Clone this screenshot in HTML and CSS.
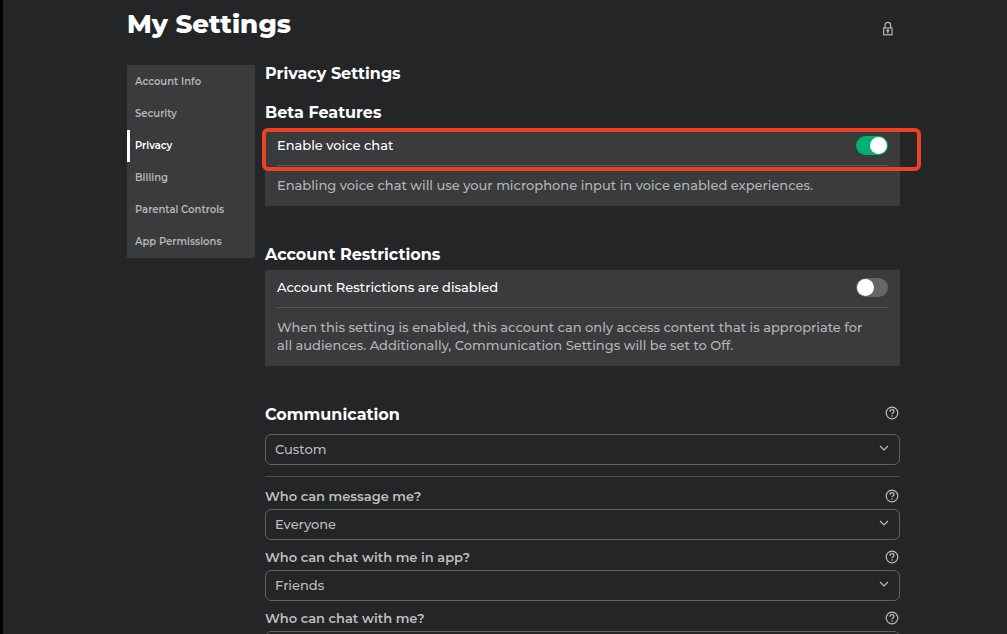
FILE: index.html
```
<!DOCTYPE html>
<html lang="en">
<head>
  <meta charset="UTF-8" />
  <meta name="viewport" content="width=device-width, initial-scale=1.0"/>
  <title>My Settings</title>
  <link rel="stylesheet" href="styles.css">
</head>
<body>
  <svg class="sprite" aria-hidden="true">
    <symbol id="icon-help" viewBox="0 0 14 14">
      <circle cx="7" cy="7" r="5.8" fill="none" stroke="currentColor" stroke-width="1.2"/>
      <path d="M5 5.7C5 4.4 5.8 3.7 7 3.7s2 .7 2 1.7c0 1.4-2 1.5-2 2.9" fill="none" stroke="currentColor" stroke-width="1.2"/>
      <circle cx="7" cy="10" r=".8" fill="currentColor"/>
    </symbol>
  </svg>

  <div class="container">
    <header class="page-header">
      <h1>My Settings</h1>
      <svg class="lock" viewBox="0 0 12 16" role="img" aria-label="Locked">
        <path d="M3 7V4.2a2.8 2.8 0 0 1 5.6 0V7" fill="none" stroke="currentColor" stroke-width="1.3"/>
        <rect x="1.6" y="7" width="8.4" height="6.8" fill="none" stroke="currentColor" stroke-width="1.2"/>
        <circle cx="5.8" cy="9.6" r="1.4" fill="currentColor"/>
        <path d="M5.8 10v2.5" stroke="currentColor" stroke-width="1.2"/>
      </svg>
    </header>

    <div class="layout">
      <nav class="menu">
        <a href="#account">Account Info</a>
        <a href="#security">Security</a>
        <a href="#privacy" class="active">Privacy</a>
        <a href="#billing">Billing</a>
        <a href="#parental">Parental Controls</a>
        <a href="#apps">App Permissions</a>
      </nav>

      <main>
        <h2>Privacy Settings</h2>

        <section class="section">
          <h2>Beta Features</h2>
          <div class="card">
            <div class="card-row">
              <label for="voice">Enable voice chat</label>
              <input type="checkbox" class="toggle" id="voice" checked>
            </div>
            <p>Enabling voice chat will use your microphone input in voice enabled experiences.</p>
            <div class="highlight"></div>
          </div>
        </section>

        <section class="section">
          <h2>Account Restrictions</h2>
          <div class="card">
            <div class="card-row">
              <label for="restrictions">Account Restrictions are disabled</label>
              <input type="checkbox" class="toggle" id="restrictions">
            </div>
            <p>When this setting is enabled, this account can only access content that is appropriate for<br>all audiences. Additionally, Communication Settings will be set to Off.</p>
          </div>
        </section>

        <section class="section">
          <div class="section-head">
            <h2 id="communication-title">Communication</h2>
            <svg class="help"><use href="#icon-help"/></svg>
          </div>
          <div class="select">
            <select id="communication" aria-labelledby="communication-title">
              <option>Custom</option>
            </select>
            <svg class="chevron" viewBox="0 0 10 6"><path d="M1 1l4 4 4-4"/></svg>
          </div>
          <hr>

          <div class="field">
            <div class="field-head">
              <label for="message">Who can message me?</label>
              <svg class="help"><use href="#icon-help"/></svg>
            </div>
            <div class="select">
              <select id="message"><option>Everyone</option></select>
              <svg class="chevron" viewBox="0 0 10 6"><path d="M1 1l4 4 4-4"/></svg>
            </div>
          </div>

          <div class="field">
            <div class="field-head">
              <label for="app-chat">Who can chat with me in app?</label>
              <svg class="help"><use href="#icon-help"/></svg>
            </div>
            <div class="select">
              <select id="app-chat"><option>Friends</option></select>
              <svg class="chevron" viewBox="0 0 10 6"><path d="M1 1l4 4 4-4"/></svg>
            </div>
          </div>

          <div class="field">
            <div class="field-head">
              <label for="chat">Who can chat with me?</label>
              <svg class="help"><use href="#icon-help"/></svg>
            </div>
            <div class="select">
              <select id="chat"></select>
            </div>
          </div>
        </section>
      </main>
    </div>
  </div>
</body>
</html>
```
FILE: styles.css
```
* { box-sizing: border-box; }

html {
  scrollbar-width: none;
}

body {
  margin: 0;
  min-height: 100vh;
  border-left: 3px solid #000;
  background-color: #232527;
  font-family: Montserrat, Inter, sans-serif;
  font-size: 13px;
  line-height: 18px;
  font-weight: 500;
  color: #fff;
}

.sprite {
  display: none;
}

.container {
  padding: 7px 107px 0 124px;
}

.page-header {
  display: flex;
  justify-content: space-between;
  align-items: center;
  padding-right: 6px;
  margin-bottom: 24px;
}

h1 {
  margin: 0;
  font-size: 26px;
  line-height: 34px;
  font-weight: 800;
}

h2 {
  margin: 0;
  font-size: 16px;
  line-height: 18px;
  font-weight: 700;
}

.lock {
  width: 12px;
  height: 16px;
  margin-top: 10px;
  color: #b0b2b3;
}

.layout {
  display: grid;
  grid-template-columns: 128px 1fr;
  gap: 10px;
  align-items: start;
}

.menu {
  padding-top: 1px;
  background: #393b3d;
}

.menu a {
  display: block;
  padding: 0 8px;
  font-size: 10px;
  line-height: 32px;
  font-weight: 600;
  color: #b4b5b6;
  text-decoration: none;
}

.menu a.active {
  padding-left: 5px;
  border-left: 3px solid #fff;
  color: #fff;
}

.section {
  margin-top: 40px;
}

main h2 + .section {
  margin-top: 21px;
}

.card {
  position: relative;
  margin-top: 6px;
  padding: 0 12px 12px;
  background: #393b3d;
}

.card-row {
  display: flex;
  justify-content: space-between;
  align-items: center;
  height: 38px;
  padding-bottom: 3px;
  border-bottom: 1px solid #56585a;
}

.card p {
  margin: 10px 0 0;
  color: #b4b5b6;
}

/* frame round the voice chat row */
.highlight {
  position: absolute;
  top: 0;
  left: -3px;
  right: -21px;
  height: 43px;
  border: 4px solid #ee4023;
  border-radius: 6px;
  pointer-events: none;
}

.toggle {
  appearance: none;
  width: 32px;
  height: 19px;
  margin: 0;
  padding: 1px;
  border-radius: 10px;
  background: #656668;
  cursor: pointer;
}

.toggle::before {
  content: "";
  display: block;
  width: 17px;
  height: 17px;
  border-radius: 50%;
  background: #fff;
}

.toggle:checked {
  background: #00b06f;
}

.toggle:checked::before {
  margin-left: auto;
}

.section-head,
.field-head {
  display: flex;
  justify-content: space-between;
  align-items: center;
  padding-right: 1px;
}

.section-head {
  align-items: flex-start;
  margin-bottom: 10px;
}

.field-head {
  margin-bottom: 4px;
  font-weight: 600;
  color: #bdbebe;
}

.help {
  width: 14px;
  height: 14px;
  color: #bdbebe;
}

.select {
  position: relative;
}

select {
  appearance: none;
  display: block;
  width: 100%;
  height: 31px;
  padding: 0 32px 1px 9px;
  background: transparent;
  border: 1px solid #606162;
  border-radius: 6px;
  font: inherit;
  color: #bdbebe;
}

.chevron {
  position: absolute;
  top: 11px;
  right: 11px;
  width: 10px;
  height: 6px;
  fill: none;
  stroke: #bdbebe;
  stroke-width: 1.2;
  pointer-events: none;
}

hr {
  margin: 11px 0 10px;
  border: 0;
  border-top: 1px solid #4a4c4e;
}

.field {
  margin-bottom: 8px;
}
```
